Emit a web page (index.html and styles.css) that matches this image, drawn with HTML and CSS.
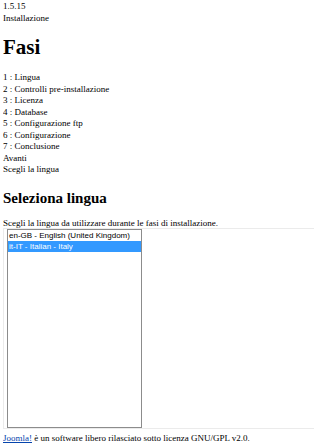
FILE: index.html
```html
<!DOCTYPE html>
<html lang="it">
<head>
    <meta charset="UTF-8">
    <title>Installazione</title>
    <link rel="stylesheet" href="styles.css">
</head>
<body>
<div class="version">1.5.15</div>
<div class="title">Installazione</div>
<h1>Fasi</h1>
<div class="steps">
    <div>1 : Lingua</div>
    <div>2 : Controlli pre-installazione</div>
    <div>3 : Licenza</div>
    <div>4 : Database</div>
    <div>5 : Configurazione ftp</div>
    <div>6 : Configurazione</div>
    <div>7 : Conclusione</div>
</div>
<div>Avanti</div>
<div>Scegli la lingua</div>
<h2>Seleziona lingua</h2>
<div class="intro">Scegli la lingua da utilizzare durante le fasi di installazione.</div>
<div class="langbox">
    <div class="select">
        <div class="option">en-GB - English (United Kingdom)</div>
        <div class="option selected">it-IT - Italian - Italy</div>
    </div>
</div>
<div class="footer"><a href="#">Joomla!</a> è un software libero rilasciato sotto licenza GNU/GPL v2.0.</div>
</body>
</html>
```
FILE: styles.css
```css
body {
    margin: 1px 3px;
    font-family: "Liberation Serif", serif;
    font-size: 9px;
    line-height: 11.5px;
    color: #000;
    background-color: #fff;
}
h1 {
    font-size: 21px;
    line-height: 23px;
    margin: 12px 0 13px;
}
h2 {
    font-size: 15px;
    line-height: 17px;
    margin: 14px 0 11px;
}
.intro {
    margin-bottom: -1px;
}
.langbox {
    border: 1px solid #ebebeb;
    border-right: 0;
    margin-right: -3px;
    padding: 0 0 0 3px;
}
.select {
    width: 133px;
    height: 197px;
    border: 1px solid #8c8c8c;
    background-color: #fff;
    font-family: "Liberation Sans", sans-serif;
    font-size: 8px;
}
.option {
    height: 11px;
    line-height: 11px;
    padding-left: 1px;
    white-space: nowrap;
}
.selected {
    background-color: #3399ff;
    color: #fff;
}
.footer {
    margin-top: 4px;
}
.footer a {
    color: #0645ad;
    text-decoration: underline;
}
```
